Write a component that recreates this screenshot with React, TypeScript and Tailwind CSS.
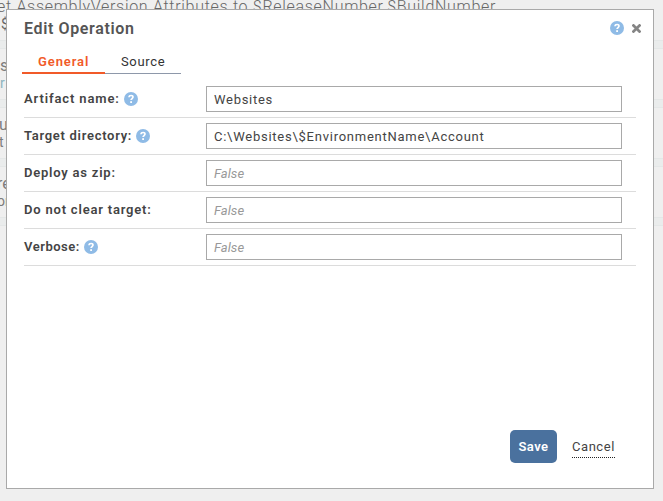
import React from "react";

function Help() {
  return (
    <svg className="block size-[14px] shrink-0" viewBox="0 0 14 14" role="img">
      <circle cx="7" cy="7" r="7" fill="#8fbbe6" />
      <path
        d="M5 5.2C5.1 4 5.9 3.5 7.1 3.5c1.1 0 1.9.6 1.9 1.6 0 1.4-1.9 1.5-1.9 3"
        fill="none"
        stroke="#fff"
        strokeWidth="1.7"
      />
      <rect x="6.2" y="9.2" width="1.8" height="1.8" fill="#fff" />
    </svg>
  );
}

type FieldProps = {
  label: string;
  spacing: string;
  help?: boolean;
  value?: string;
  valueSpacing?: string;
};

function Field({ label, spacing, help, value, valueSpacing = "" }: FieldProps) {
  return (
    <div className="flex h-[37px] border-b border-[#dcdcdc] pt-[5px]">
      <div className="flex h-[26px] w-[182px] items-center gap-[4px] font-semibold text-[#444]">
        <span className={`whitespace-nowrap leading-[26px] ${spacing}`}>{label}</span>
        {help && <Help />}
      </div>
      <div className="h-[26px] w-[416px] border border-[#a9a9a9] bg-white pl-[7px] pt-px leading-[24px]">
        {value ? (
          <span className={`whitespace-nowrap text-[#444] ${valueSpacing}`}>{value}</span>
        ) : (
          <span className="italic tracking-[0.05px] text-[#999]">False</span>
        )}
      </div>
    </div>
  );
}

function Task({
  title,
  detail,
  tint = "",
  offset = "left-0",
}: {
  title: string;
  detail: string;
  tint?: string;
  offset?: string;
}) {
  return (
    <div className="relative h-[59px] border-b border-[#e4e7e7] bg-[#efefef] text-[#7c7c7c]">
      <div className={`absolute top-[7px] text-[16px] leading-[20px] ${offset}`}>{title}</div>
      <div className={`absolute top-[25px] text-[14px] leading-[18px] ${offset} ${tint}`}>{detail}</div>
      <div className="absolute bottom-0 h-[8px] w-full border-t border-[#e4e7e7] bg-[#eaecec]" />
    </div>
  );
}

export default function App() {
  return (
    <div className="relative h-[501px] w-[663px] overflow-hidden bg-[#efefef] font-[Roboto,sans-serif] text-[13px]">
      <div className="-mt-[10px]">
        <div className="relative h-[59px] border-b border-[#e4e7e7] text-[#666]">
          <div className="absolute -left-[3px] top-[7px] whitespace-nowrap text-[16px] font-light leading-[20px] tracking-[0.7px]">
            et AssemblyVersion Attributes to $ReleaseNumber.$BuildNumber
          </div>
          <div className="absolute left-[1px] top-[25px] text-[14px] leading-[18px]">$</div>
          <div className="absolute bottom-0 h-[8px] w-full border-t border-[#e4e7e7] bg-[#eaecec]" />
        </div>
        <Task title="s" detail="r" tint="text-[#8db5c0]" offset="left-0" />
        <Task title="u" detail="t" offset="-left-[1px]" />
        <Task title="re" detail="or" offset="-left-[3px]" />
      </div>

      <section className="absolute left-[6px] top-[9px] flex h-[480px] w-[648px] flex-col border border-[#a9a9a9] bg-white">
        <header className="flex h-[37px] items-start pl-[17px] pr-[12px]">
          <h1 className="mt-[8px] flex-1 whitespace-nowrap text-[16px] font-semibold leading-[22px] tracking-[0.63px] text-[#555]">
            Edit Operation
          </h1>
          <div className="mt-[11px] flex items-center gap-[8px]">
            <Help />
            <svg className="block h-[9px] w-[9px]" viewBox="0 0 9 9">
              <path d="M1.5 1.5l6 6M7.5 1.5l-6 6" stroke="#858585" strokeWidth="2.7" strokeLinecap="square" />
            </svg>
          </div>
        </header>
        <nav className="ml-[15px] flex h-[27px] leading-[29px]">
          <div className="w-[83px] border-b-2 border-[#f15a29] pl-[16px] font-semibold tracking-[0.9px] text-[#f15a29]">
            General
          </div>
          <div className="w-[76px] border-b border-[#8e98aa] pl-[16px] tracking-[0.65px] text-[#333]">Source</div>
        </nav>
        <div className="ml-[17px] mt-[7px] w-[612px]">
          <Field label="Artifact name:" spacing="tracking-[0.88px]" help value="Websites" valueSpacing="tracking-[0.72px]" />
          <Field label="Target directory:" spacing="tracking-[0.71px]" help value="C:\Websites\$EnvironmentName\Account" valueSpacing="tracking-[0.75px]" />
          <Field label="Deploy as zip:" spacing="tracking-[0.78px]" />
          <Field label="Do not clear target:" spacing="tracking-[0.8px]" />
          <Field label="Verbose:" spacing="tracking-[0.52px]" help />
        </div>
        <footer className="mb-[25px] ml-[503px] mt-auto flex items-start">
          <button className="h-[33px] w-[47px] rounded-[5px] bg-[#4a719e] font-semibold tracking-[0.45px] text-white">
            Save
          </button>
          <a className="ml-[15px] mt-[8px] block h-[20px] w-[43px] border-b border-dotted border-[#222] leading-[18px] tracking-[0.55px] text-[#444]">
            Cancel
          </a>
        </footer>
      </section>
    </div>
  );
}
